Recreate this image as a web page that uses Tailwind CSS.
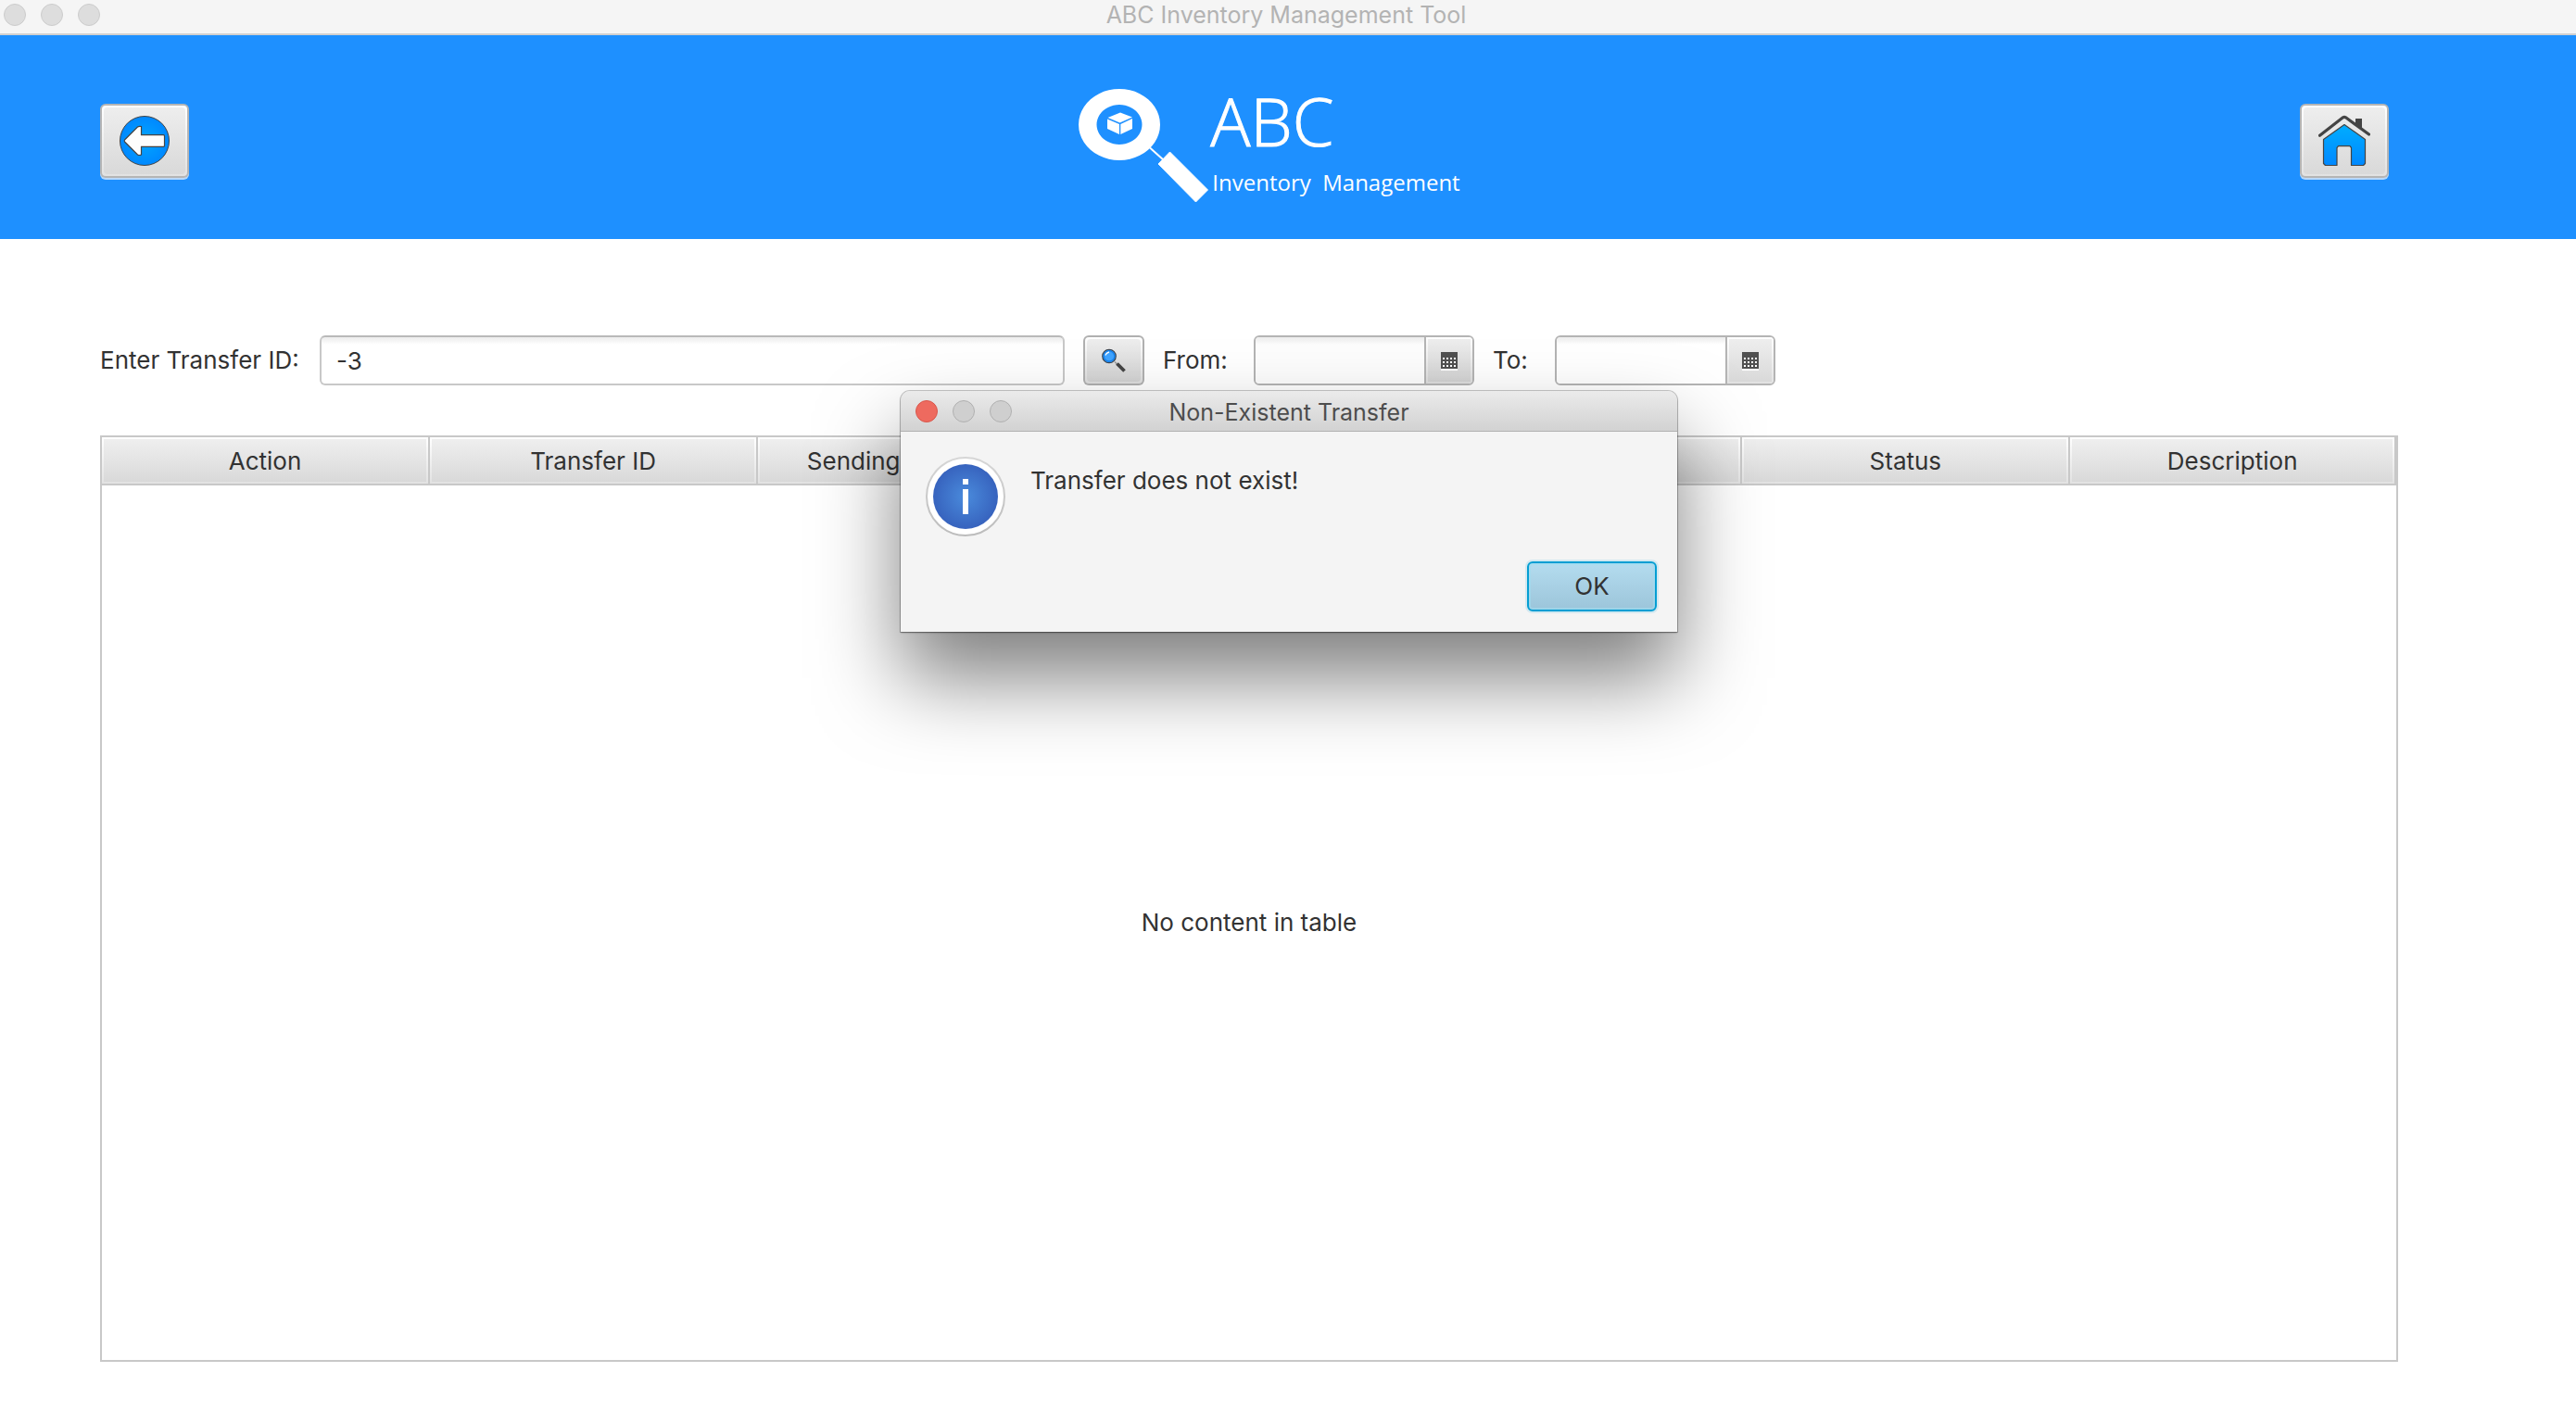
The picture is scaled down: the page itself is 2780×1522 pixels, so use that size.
<!DOCTYPE html>
<html lang="en">
<head>
<meta charset="utf-8">
<title>ABC Inventory Management Tool</title>
<script src="https://cdn.jsdelivr.net/npm/@tailwindcss/browser@4"></script>
</head>
<body class="flex min-h-screen flex-col bg-white font-['Inter',sans-serif] text-[26px] leading-8 text-[#323232]">

  <!-- Window title bar -->
  <div class="grid h-[38px] grid-cols-[1fr_auto_1fr] items-start border-b-2 border-[#d0d0d0] bg-[#f5f5f5] px-1 pt-1">
    <div class="flex gap-4">
      <span class="size-6 rounded-full border border-[#cccccc] bg-[#dddddd]"></span>
      <span class="size-6 rounded-full border border-[#cccccc] bg-[#dddddd]"></span>
      <span class="size-6 rounded-full border border-[#cccccc] bg-[#dddddd]"></span>
    </div>
    <div class="pr-1 text-[25px] leading-6 text-[#b3b3b3]">ABC Inventory Management Tool</div>
  </div>

  <!-- Brand header -->
  <header class="grid h-[220px] grid-cols-[1fr_auto_1fr] items-center bg-[#1e90ff] pt-2 pr-[202px] pl-[108px]">
    <button type="button" aria-label="Back" class="flex h-20 w-24 rounded-md bg-[#b5b5b5] p-[2px] shadow-[0_2px_0_#b9d8f8]">
      <span class="flex flex-1 rounded bg-linear-to-b from-white to-[#e2e2e2] p-[2px]">
        <span class="flex flex-1 items-center justify-center rounded-sm bg-linear-to-b from-[#eeeeee] to-[#d9d9d9]">
          <svg class="size-14" viewBox="0 0 56 56" aria-hidden="true">
            <defs><radialGradient id="disc"><stop offset="0" stop-color="#00a6ff"/><stop offset="1" stop-color="#0088ff"/></radialGradient></defs>
            <circle cx="28" cy="28" r="26.5" fill="url(#disc)" stroke="#444" stroke-width="1"/>
            <path d="M6.5 27 20.500 13Q22 12 24.500 12.500V21.700H48.500Q49.500 21.700 49.500 22.700V33.300Q49.500 34.300 48.500 34.300H24.500V43Q22 44 20.500 43L6.500 29Q5.800 28 6.500 27Z" fill="#fdfdfd" stroke="#444" stroke-width="1.200"/>
          </svg>
        </span>
      </span>
    </button>

    <div class="flex h-[132px] pr-[2px] pl-14 text-white">
      <svg class="h-[132px] w-[142px]" viewBox="0 0 142 132" fill="#fff" aria-hidden="true">
        <path fill-rule="evenodd" d="M44 10a44 38.500 0 1 0 .01 0ZM44 27a24.500 21.500 0 1 1-.01 0Z"/>
        <path d="M45 35.500 58 40.500 44.500 46.500 31.500 41ZM31 42.500 44 48V59L31 53ZM58 42 45.300 48V59L58 53Z"/>
        <path d="M77 73.500 92 87" stroke="#fff" stroke-width="2"/>
        <path d="M98.500 78 139.500 119 126.500 132 86 91Z" stroke="#fff" stroke-width="1" stroke-linejoin="round"/>
      </svg>
      <div class="pt-2 font-['Open_Sans',sans-serif]">
        <div class="text-[72px] leading-[72px] font-light [-webkit-text-stroke:1px_white]">ABC</div>
        <div class="mt-4 pl-[2px] text-2xl leading-[30px] whitespace-pre">Inventory  Management</div>
      </div>
    </div>

    <button type="button" aria-label="Home" class="flex h-20 w-24 justify-self-end rounded-md bg-[#b5b5b5] p-[2px] shadow-[0_2px_0_#b9d8f8]">
      <span class="flex flex-1 rounded bg-linear-to-b from-white to-[#e2e2e2] p-[2px]">
        <span class="flex flex-1 items-center justify-center rounded-sm bg-linear-to-b from-[#eeeeee] to-[#d9d9d9]">
          <svg class="size-14" viewBox="0 0 56 56" fill="none" aria-hidden="true">
            <defs><linearGradient id="wall" x2="0" y2="1"><stop offset="0" stop-color="#00adff"/><stop offset="1" stop-color="#0088ff"/></linearGradient></defs>
            <path d="M40 4h7v12l-7-5Z" fill="#444"/>
            <path d="M1.500 22.300 26.500 2.800Q28 1.800 29.500 2.800L54.500 21" stroke="#444" stroke-width="3.200" stroke-linecap="round"/>
            <path d="M28 10.500 50.500 26.500V52.500L48.500 54.500H35.500V35.500L34 33.700H21.500L20 35.500V54.500H7.500L5.500 52.500V26.500Z" fill="url(#wall)" stroke="#444" stroke-width="1.200" stroke-linejoin="round"/>
          </svg>
        </span>
      </span>
    </button>
  </header>

  <main class="flex flex-1 flex-col pt-[104px] pr-[192px] pb-[52px] pl-[108px]">
    <form class="flex h-[54px] items-center gap-5" onsubmit="return false">
      <label for="transfer-id" class="w-[217px] shrink-0 whitespace-nowrap">Enter Transfer ID:</label>
      <input id="transfer-id" type="text" value="-3" class="h-[54px] w-full max-w-[804px] rounded-md border-2 border-[#c8c8c8] border-t-[#b9b9b9] bg-white bg-linear-to-b from-[#ececec] to-white to-[8px] px-4 outline-none">
      <button type="submit" aria-label="Search" class="flex h-[54px] w-[66px] shrink-0 rounded-md bg-[#b0b0b0] p-[2px]">
        <span class="flex flex-1 rounded bg-linear-to-b from-white to-[#dddddd] p-[2px]">
          <span class="flex flex-1 items-center justify-center rounded-sm bg-linear-to-b from-[#eeeeee] to-[#d2d2d2]">
            <svg class="size-7" viewBox="0 0 28 28" fill="none" aria-hidden="true">
              <path d="M15 15.500 17.500 18" stroke="#999" stroke-width="1.500"/>
              <path d="M17.500 17.500 25.500 25.500" stroke="#444" stroke-width="3.800"/>
              <circle cx="9" cy="9.500" r="7.200" fill="#3fa4ff" stroke="#3a4450" stroke-width="1.300"/>
              <circle cx="9" cy="9.500" r="5.800" stroke="#1683ee" stroke-width="1.400"/>
              <path d="M4.800 8.500Q5.800 5.800 9 5" stroke="#fff" stroke-width="1.300"/>
            </svg>
          </span>
        </span>
      </button>
      <label for="from-date" class="w-[78px] shrink-0">From:</label>
      <div class="flex h-[54px] w-[238px] shrink-0 overflow-hidden rounded-md border-2 border-[#b4b4b4]">
        <input id="from-date" type="text" class="w-full min-w-0 flex-1 bg-linear-to-b from-[#ececec] to-[#fdfdfd] to-[8px] px-3 outline-none">
        <button type="button" aria-label="Choose from date" class="flex w-[52px] border-l-2 border-[#b4b4b4] bg-linear-to-b from-white to-[#dddddd] p-[2px]">
          <span class="flex flex-1 items-center justify-center bg-linear-to-b from-[#eeeeee] to-[#d2d2d2]">
            <svg class="size-[18px] overflow-visible" viewBox="0 0 18 18" aria-hidden="true">
              <path d="M0 0h18v18H0Z" fill="#505050"/>
              <path d="M2 7h14M2 11h14M2 15h14" stroke="#fff" stroke-width="2" stroke-dasharray="2 2"/>
              <path d="M0 18h18v2H0Z" fill="#fff"/>
            </svg>
          </span>
        </button>
      </div>
      <label for="to-date" class="w-[47px] shrink-0">To:</label>
      <div class="flex h-[54px] w-[238px] shrink-0 overflow-hidden rounded-md border-2 border-[#b4b4b4]">
        <input id="to-date" type="text" class="w-full min-w-0 flex-1 bg-linear-to-b from-[#ececec] to-white to-[8px] px-3 outline-none">
        <button type="button" aria-label="Choose to date" class="flex w-[52px] border-l-2 border-[#b4b4b4] bg-linear-to-b from-white to-[#e2e2e2] p-[2px]">
          <span class="flex flex-1 items-center justify-center bg-linear-to-b from-[#eeeeee] to-[#d9d9d9]">
            <svg class="size-[18px] overflow-visible" viewBox="0 0 18 18" aria-hidden="true">
              <path d="M0 0h18v18H0Z" fill="#505050"/>
              <path d="M2 7h14M2 11h14M2 15h14" stroke="#fff" stroke-width="2" stroke-dasharray="2 2"/>
              <path d="M0 18h18v2H0Z" fill="#fff"/>
            </svg>
          </span>
        </button>
      </div>
    </form>

    <!-- Transfers table -->
    <section class="mt-[54px] flex flex-1 flex-col border-2 border-[#c8c8c8]">
      <table class="w-full table-fixed border-separate border-spacing-0">
        <colgroup>
          <col span="6" class="w-[14.3%]">
          <col>
        </colgroup>
        <thead>
          <tr>
            <th scope="col" class="border-r-2 border-b-2 border-[#c8c8c8] bg-linear-to-b from-white to-[#e2e2e2] p-[2px] font-normal"><div class="bg-linear-to-b from-[#efefef] to-[#d9d9d9] pt-2 pb-[6px]">Action</div></th>
            <th scope="col" class="border-r-2 border-b-2 border-[#c8c8c8] bg-linear-to-b from-white to-[#e2e2e2] p-[2px] font-normal"><div class="bg-linear-to-b from-[#efefef] to-[#d9d9d9] pt-2 pb-[6px]">Transfer ID</div></th>
            <th scope="col" class="border-r-2 border-b-2 border-[#c8c8c8] bg-linear-to-b from-white to-[#e2e2e2] p-[2px] font-normal"><div class="bg-linear-to-b from-[#efefef] to-[#d9d9d9] pt-2 pb-[6px]">Sending Warehouse</div></th>
            <th scope="col" class="border-r-2 border-b-2 border-[#c8c8c8] bg-linear-to-b from-white to-[#e2e2e2] p-[2px] font-normal"><div class="bg-linear-to-b from-[#efefef] to-[#d9d9d9] pt-2 pb-[6px]">&nbsp;</div></th>
            <th scope="col" class="border-r-2 border-b-2 border-[#c8c8c8] bg-linear-to-b from-white to-[#e2e2e2] p-[2px] font-normal"><div class="bg-linear-to-b from-[#efefef] to-[#d9d9d9] pt-2 pb-[6px]">&nbsp;</div></th>
            <th scope="col" class="border-r-2 border-b-2 border-[#c8c8c8] bg-linear-to-b from-white to-[#e2e2e2] p-[2px] font-normal"><div class="bg-linear-to-b from-[#efefef] to-[#d9d9d9] pt-2 pb-[6px]">Status</div></th>
            <th scope="col" class="border-r-2 border-b-2 border-[#c8c8c8] bg-linear-to-b from-white to-[#e2e2e2] p-[2px] font-normal"><div class="bg-linear-to-b from-[#efefef] to-[#d9d9d9] pt-2 pb-[6px]">Description</div></th>
          </tr>
        </thead>
      </table>
      <p class="flex flex-1 items-center justify-center">No content in table</p>
    </section>
  </main>

  <!-- Alert dialog -->
  <div class="absolute inset-x-0 top-[422px] flex justify-center pl-[2px]">
    <div role="alertdialog" aria-labelledby="dialog-title" aria-describedby="dialog-text" class="w-[838px] rounded-t-[10px] bg-[#f4f4f4] shadow-[0_0_0_1px_rgba(0,0,0,0.2),0_1px_2px_rgba(0,0,0,0.4),0_50px_88px_rgba(0,0,0,0.5)]">
      <div class="grid h-11 grid-cols-[1fr_auto_1fr] items-center rounded-t-[10px] border-b border-[#b1b1b1] bg-linear-to-b from-[#ebebeb] to-[#d2d2d2] px-4">
        <div class="flex gap-4">
          <button type="button" aria-label="Close" class="size-6 rounded-full border border-[#d9564b] bg-[#ee6a5f]"></button>
          <span class="size-6 rounded-full border border-[#b0b0b0] bg-[#cfcfcf]"></span>
          <span class="size-6 rounded-full border border-[#b0b0b0] bg-[#cfcfcf]"></span>
        </div>
        <h1 id="dialog-title" class="pt-[2px] text-[25px] text-[#4d4d4d]">Non-Existent Transfer</h1>
      </div>
      <div class="flex flex-col gap-[27px] pt-[27px] pr-[22px] pb-[22px] pl-[27px]">
        <div class="flex gap-[27px]">
          <svg class="size-[86px]" viewBox="0 0 86 86" aria-hidden="true">
            <defs>
              <radialGradient id="info"><stop offset="0" stop-color="#4a8bdc"/><stop offset="1" stop-color="#3763be"/></radialGradient>
              <linearGradient id="rim" x2="0" y2="1"><stop offset="0" stop-color="#d6d6d6"/><stop offset="1" stop-color="#bcbcbc"/></linearGradient>
            </defs>
            <circle cx="43" cy="43" r="42" fill="#fff" stroke="url(#rim)" stroke-width="2"/>
            <circle cx="43" cy="43" r="35" fill="url(#info)"/>
            <path d="M40 24h6v6h-6ZM40 35h6v27h-6Z" fill="#fff"/>
          </svg>
          <p id="dialog-text" class="pt-[10px]">Transfer does not exist!</p>
        </div>
        <button type="button" class="h-[54px] w-[140px] self-end rounded-md border-2 border-[#039ed3] bg-linear-to-b from-[#b4dcef] to-[#9cc5da] shadow-[0_0_0_2px_#d3e8f0,inset_0_0_0_2px_rgba(160,220,240,0.6)]">OK</button>
      </div>
    </div>
  </div>
</body>
</html>
